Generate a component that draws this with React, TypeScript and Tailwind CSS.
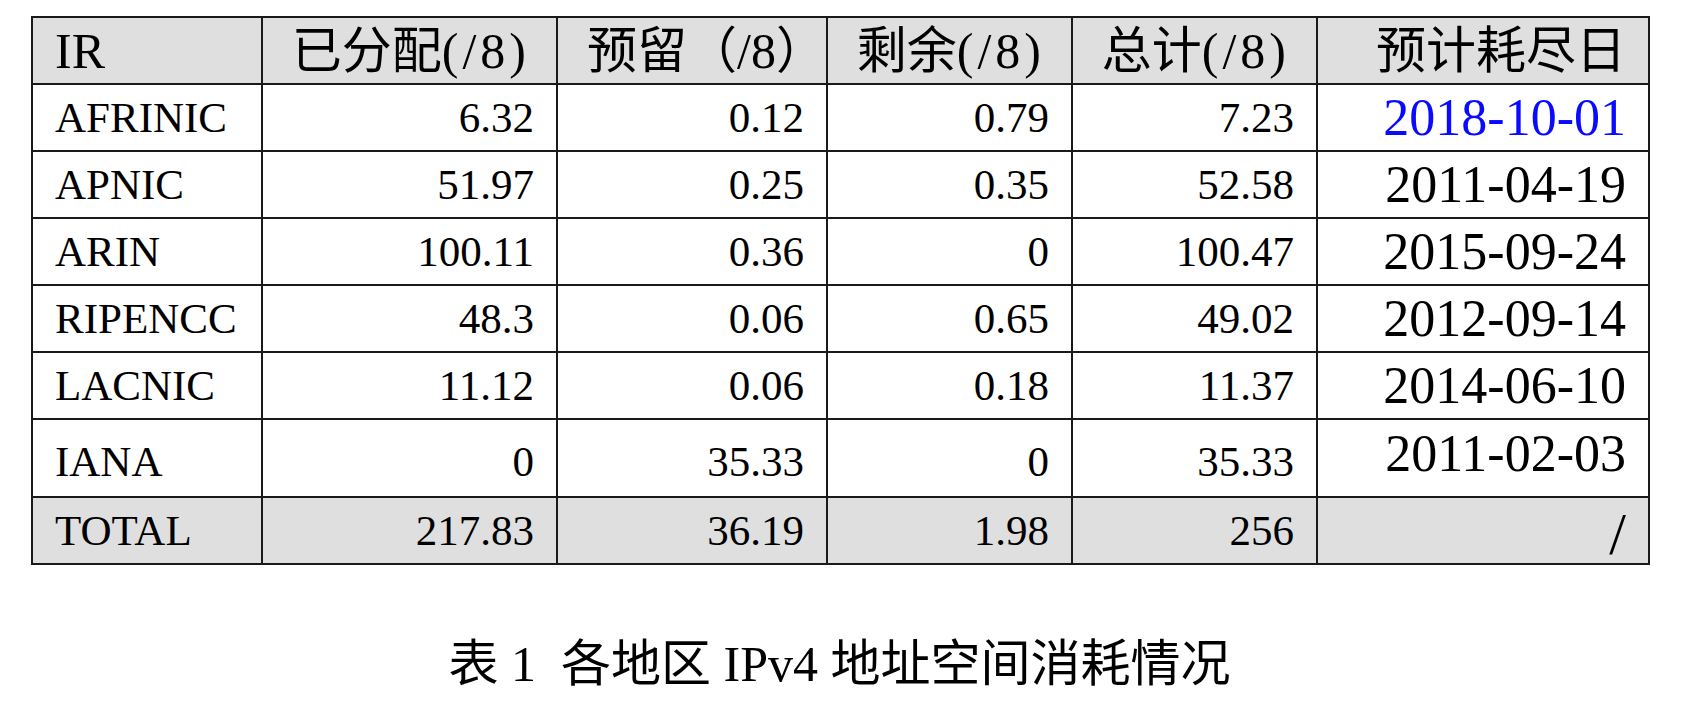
import React from 'react';

type Row = {
  name: string;
  allocated: string;
  reserved: string;
  remaining: string;
  total: string;
  date: string;
  highlight?: boolean;
  tall?: boolean;
};

const rows: Row[] = [
  { name: 'AFRINIC', allocated: '6.32', reserved: '0.12', remaining: '0.79', total: '7.23', date: '2018-10-01', highlight: true },
  { name: 'APNIC', allocated: '51.97', reserved: '0.25', remaining: '0.35', total: '52.58', date: '2011-04-19' },
  { name: 'ARIN', allocated: '100.11', reserved: '0.36', remaining: '0', total: '100.47', date: '2015-09-24' },
  { name: 'RIPENCC', allocated: '48.3', reserved: '0.06', remaining: '0.65', total: '49.02', date: '2012-09-14' },
  { name: 'LACNIC', allocated: '11.12', reserved: '0.06', remaining: '0.18', total: '11.37', date: '2014-06-10' },
  { name: 'IANA', allocated: '0', reserved: '35.33', remaining: '0', total: '35.33', date: '2011-02-03', tall: true },
];

const cell = 'border-2 border-[#1a1a1a] px-[22px] align-middle';

const App: React.FC = () => {
  return (
    <div className="w-[1693px] h-[710px] bg-white text-black font-[family-name:Liberation_Serif,Noto_Sans_CJK_SC,serif]">
      <div className="pt-[16px] pl-[31px]">
        <table className="table-fixed border-collapse w-[1617px]">
          <colgroup>
            <col className="w-[230px]" />
            <col className="w-[295px]" />
            <col className="w-[270px]" />
            <col className="w-[245px]" />
            <col className="w-[245px]" />
            <col className="w-[332px]" />
          </colgroup>
          <thead>
            <tr className="h-[67px] bg-[#dfdfdf] text-[50px] leading-none">
              <th className={`${cell} text-left font-normal`}>IR</th>
              <th className={`${cell} text-right font-normal pr-[26px]`}>
                已分配<span className="tracking-[4px]">(/8)</span>
              </th>
              <th className={`${cell} text-right font-normal pr-0`}>预留（/8）</th>
              <th className={`${cell} text-right font-normal pr-[26px]`}>
                剩余<span className="tracking-[4px]">(/8)</span>
              </th>
              <th className={`${cell} text-right font-normal pr-[26px]`}>
                总计<span className="tracking-[4px]">(/8)</span>
              </th>
              <th className={`${cell} text-right font-normal`}>预计耗尽日</th>
            </tr>
          </thead>
          <tbody className="text-[43px] leading-none">
            {rows.map((r) => (
              <tr key={r.name} className={r.tall ? 'h-[78px]' : 'h-[67px]'}>
                <td className={`${cell} text-left ${r.tall ? 'pt-[6px]' : ''}`}>{r.name}</td>
                <td className={`${cell} text-right ${r.tall ? 'pt-[6px]' : ''}`}>{r.allocated}</td>
                <td className={`${cell} text-right ${r.tall ? 'pt-[6px]' : ''}`}>{r.reserved}</td>
                <td className={`${cell} text-right ${r.tall ? 'pt-[6px]' : ''}`}>{r.remaining}</td>
                <td className={`${cell} text-right ${r.tall ? 'pt-[6px]' : ''}`}>{r.total}</td>
                <td className={`${cell} text-right pr-[22px]`}>
                  <span
                    className={`text-[52px] ${r.highlight ? 'text-[#0a0aff]' : ''} ${r.tall ? 'relative -top-[4px]' : ''}`}
                  >
                    {r.date}
                  </span>
                </td>
              </tr>
            ))}
            <tr className="h-[67px] bg-[#dfdfdf]">
              <td className={`${cell} text-left`}>TOTAL</td>
              <td className={`${cell} text-right`}>217.83</td>
              <td className={`${cell} text-right`}>36.19</td>
              <td className={`${cell} text-right`}>1.98</td>
              <td className={`${cell} text-right`}>256</td>
              <td className={`${cell} text-right pr-[22px]`}>
                <span className="text-[60px] relative top-[3px]">/</span>
              </td>
            </tr>
          </tbody>
        </table>
      </div>
      <div className="flex justify-center pl-[31px] w-[1648px] pt-[74px] text-[50px] leading-none">
        <span>表 1&nbsp;&nbsp;各地区 IPv4 地址空间消耗情况</span>
      </div>
    </div>
  );
};

export default App;
